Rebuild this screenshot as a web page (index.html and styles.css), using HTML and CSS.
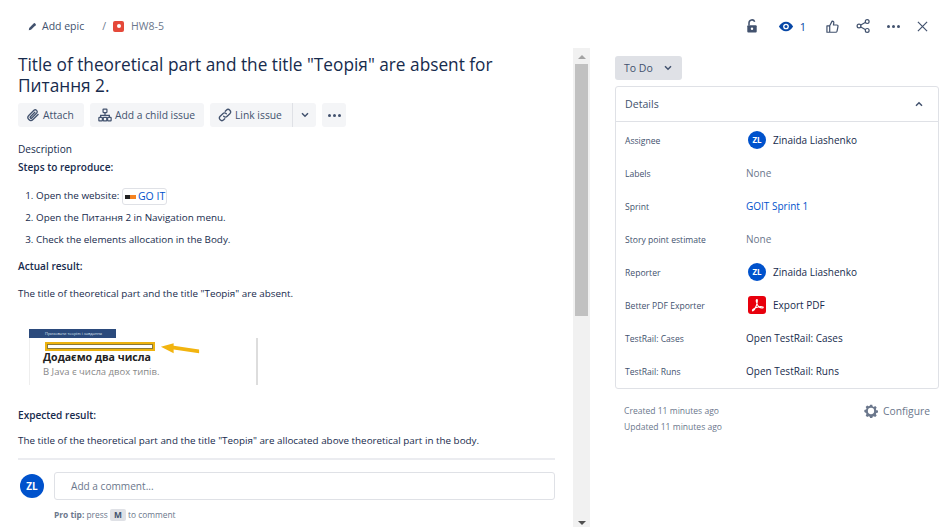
FILE: index.html
```html
<!DOCTYPE html>
<html lang="en">
<head>
  <meta charset="UTF-8">
  <title>HW8-5</title>
  <link rel="stylesheet" href="styles.css">
</head>
<body>
  <div class="page">
    <header class="topbar">
      <div class="crumbs">
        <a class="crumb crumb-epic">
          <svg class="ico-pen" viewBox="0 0 12 12"><path d="M1 11l.6-3L7.8 1.8a1 1 0 0 1 1.4 0l1 1a1 1 0 0 1 0 1.4L4 10.4z" fill="#42526e"/></svg>
          Add epic
        </a>
        <span class="slash">/</span>
        <span class="bug-ico"><i></i></span>
        <a class="crumb crumb-key">HW8-5</a>
      </div>
      <div class="top-actions">
        <svg class="ico-lock" viewBox="0 0 14 16"><path d="M3.5 7V4.2a3.4 3.4 0 0 1 6.6-1.1" fill="none" stroke="#42526e" stroke-width="1.8"/><rect x="1.5" y="7" width="11" height="8.5" rx="1.2" fill="#42526e"/><circle cx="7" cy="11.2" r="1.4" fill="#fff"/></svg>
        <span class="watch">
          <svg class="ico-eye" viewBox="0 0 18 12"><path d="M1 6c2-3.6 4.8-5.4 8-5.4s6 1.8 8 5.4c-2 3.6-4.8 5.4-8 5.4S3 9.6 1 6z" fill="#0747a6"/><circle cx="9" cy="6" r="3.2" fill="#fff"/><circle cx="9" cy="6" r="1.7" fill="#0747a6"/></svg>
          <span>1</span>
        </span>
        <svg class="ico-thumb" viewBox="0 0 14 14"><path d="M4 6.2 6.6 1.2c1.4-.2 2 .8 1.8 2L8 5.4h3.6c1 0 1.5.7 1.3 1.6l-1 5c-.2.7-.7 1.2-1.5 1.2H4zM1 6.4h3v6.8H1z" fill="none" stroke="#42526e" stroke-width="1.3" stroke-linejoin="round"/></svg>
        <svg class="ico-share" viewBox="0 0 14 14"><path d="M3 7l8-4.600M3 7l8 4.600" stroke="#42526e" stroke-width="1.2"/><circle cx="3" cy="7" r="1.9" fill="#fff" stroke="#42526e" stroke-width="1.2"/><circle cx="11.2" cy="2.6" r="1.9" fill="#fff" stroke="#42526e" stroke-width="1.2"/><circle cx="11.2" cy="11.4" r="1.9" fill="#fff" stroke="#42526e" stroke-width="1.2"/></svg>
        <span class="dots"><i></i><i></i><i></i></span>
        <svg class="ico-close" viewBox="0 0 12 12"><path d="M1 1l10 10M11 1 1 11" stroke="#42526e" stroke-width="1.3"/></svg>
      </div>
    </header>

    <div class="columns">
      <main class="issue">
        <div class="issue-body">
          <h1>Title of theoretical part and the title "Теорія" are absent for Питання 2.</h1>
          <div class="toolbar">
            <button class="btn btn-attach">
              <svg class="ico-btn" viewBox="0 0 16 16"><path d="M13.8 7.4 8 13.2a3.3 3.3 0 0 1-4.800-4.700l5.900-5.900a2.200 2.200 0 0 1 3.100 3.100l-5.600 5.700a1 1 0 0 1-1.500-1.500l5-5" fill="none" stroke="#42526e" stroke-width="1.5" stroke-linecap="round"/></svg>
              Attach
            </button>
            <button class="btn btn-child">
              <svg class="ico-btn" viewBox="0 0 16 16"><path d="M8 5v3.500M3 11V8.500h10V11" fill="none" stroke="#42526e" stroke-width="1.4"/><rect x="5.8" y="1.2" width="4.4" height="4" rx=".6" fill="none" stroke="#42526e" stroke-width="1.4"/><rect x="1" y="10.8" width="4" height="4" rx=".6" fill="none" stroke="#42526e" stroke-width="1.4"/><rect x="6" y="10.8" width="4" height="4" rx=".6" fill="none" stroke="#42526e" stroke-width="1.4"/><rect x="11" y="10.8" width="4" height="4" rx=".6" fill="none" stroke="#42526e" stroke-width="1.4"/></svg>
              Add a child issue
            </button>
            <div class="btn-group">
              <button class="btn btn-link">
                <svg class="ico-btn" viewBox="0 0 16 16"><path d="M6.5 9.5a2.800 2.800 0 0 0 4 0l3-3a2.800 2.800 0 0 0-4-4L8.300 3.700M9.500 6.500a2.800 2.800 0 0 0-4 0l-3 3a2.800 2.800 0 0 0 4 4l1.200-1.200" fill="none" stroke="#42526e" stroke-width="1.5" stroke-linecap="round"/></svg>
                Link issue
              </button>
              <button class="btn btn-caret"><svg class="ico-chev" viewBox="0 0 8 6"><path d="M1 1.3 4 4.300l3-3" fill="none" stroke="#42526e" stroke-width="1.5"/></svg></button>
            </div>
            <button class="btn btn-more"><span class="dots"><i></i><i></i><i></i></span></button>
          </div>

          <div class="desc-label">Description</div>
          <p class="strong first">Steps to reproduce:</p>
          <ol class="steps">
            <li>Open the website: <a class="smart-link"><span class="favicon"><i></i><b></b></span>GO IT</a></li>
            <li>Open the Питання 2 in Navigation menu.</li>
            <li>Check the elements allocation in the Body.</li>
          </ol>
          <p class="strong">Actual result:</p>
          <p class="para">The title of theoretical part and the title "Теорія" are absent.</p>

          <div class="shot">
            <div class="shot-bar">Приховати теорію і завдання</div>
            <div class="shot-page">
              <div class="shot-mark">
                <span class="shot-box"></span>
                <svg class="shot-arrow" viewBox="0 0 44 14"><path d="M43 11 15 7V11L1 4 15 0V3L43 7z" fill="#f2b40f"/></svg>
              </div>
              <div class="shot-title">Додаємо два числа</div>
              <div class="shot-text">В Java є числа двох типів.</div>
            </div>
          </div>

          <p class="strong">Expected result:</p>
          <p class="para para-last">The title of the theoretical part and the title "Теорія" are allocated above theoretical part in the body.</p>

          <div class="comment">
            <div class="avatar avatar-lg">ZL</div>
            <div class="comment-main">
              <div class="comment-input">Add a comment...</div>
              <div class="protip"><b>Pro tip:</b> press <kbd>M</kbd> to comment</div>
            </div>
          </div>
        </div>
        <div class="scrollbar">
          <span class="arrow-up"></span>
          <div class="track"><div class="thumb"></div></div>
          <span class="arrow-down"></span>
        </div>
      </main>

      <aside class="side">
        <button class="status">To Do <svg class="ico-chev" viewBox="0 0 8 6"><path d="M1 1.3 4 4.300l3-3" fill="none" stroke="#42526e" stroke-width="1.5"/></svg></button>
        <section class="panel">
          <div class="panel-head">
            <span>Details</span>
            <svg class="ico-chev" viewBox="0 0 8 6"><path d="M1 4.7 4 1.700l3 3" fill="none" stroke="#42526e" stroke-width="1.5"/></svg>
          </div>
          <div class="rows">
            <div class="row"><div class="key">Assignee</div><div class="val val-ico"><span class="avatar">ZL</span>Zinaida Liashenko</div></div>
            <div class="row"><div class="key">Labels</div><div class="val muted">None</div></div>
            <div class="row"><div class="key">Sprint</div><div class="val link">GOIT Sprint 1</div></div>
            <div class="row"><div class="key">Story point estimate</div><div class="val muted">None</div></div>
            <div class="row"><div class="key">Reporter</div><div class="val val-ico"><span class="avatar">ZL</span>Zinaida Liashenko</div></div>
            <div class="row"><div class="key">Better PDF Exporter</div><div class="val val-ico">
              <span class="pdf-ico"><svg viewBox="0 0 18 18"><path d="M9 3.5c-.8 0-.9 1-.6 2.500.4 2 1.500 4 3 5.300 1.200.8 3.500 1 3.800.2.200-.7-1.800-1.100-4-.8-2.300.3-4.900 1.300-6.200 2.700-.9 1-.6 1.600 0 1.400.9-.4 2.400-2.700 3.300-5 .7-1.900 1.500-6.300.7-6.300z" fill="none" stroke="#fff" stroke-width="1.1"/></svg></span>
              Export PDF</div></div>
            <div class="row"><div class="key">TestRail: Cases</div><div class="val">Open TestRail: Cases</div></div>
            <div class="row"><div class="key">TestRail: Runs</div><div class="val">Open TestRail: Runs</div></div>
          </div>
        </section>
        <div class="side-foot">
          <div class="dates">
            <div>Created 11 minutes ago</div>
            <div>Updated 11 minutes ago</div>
          </div>
          <a class="configure">
            <svg class="ico-gear" viewBox="0 0 16 16"><path d="M6.8 1h2.400l.4 1.900 1.300.6 1.700-1 1.700 1.700-1 1.700.6 1.300 1.900.4v2.400l-1.900.4-.6 1.300 1 1.700-1.700 1.700-1.700-1-1.300.6-.4 1.900H6.800l-.4-1.900-1.300-.6-1.700 1-1.700-1.700 1-1.700-.6-1.300L.2 9.400V7l1.900-.4.6-1.300-1-1.700 1.700-1.700 1.700 1 1.300-.6z" transform="translate(.2 -.2)" fill="#6b778c"/><circle cx="8" cy="8" r="3.6" fill="#fff"/></svg>
            Configure
          </a>
        </div>
      </aside>
    </div>
  </div>
</body>
</html>
```

FILE: styles.css
```css
* {
  margin: 0;
  padding: 0;
  box-sizing: border-box;
}
html, body {
  height: 527px;
  overflow: hidden;
}
body {
  font-family: "Open Sans", "Noto Sans", sans-serif;
  font-size: 10px;
  color: #172b4d;
  background-color: #fff;
}
button {
  font-family: inherit;
  border: 0;
  cursor: pointer;
}
svg {
  display: block;
  flex: none;
}
.page {
  display: flex;
  flex-direction: column;
  height: 527px;
}

/* top bar */
.topbar {
  display: flex;
  justify-content: space-between;
  align-items: center;
  height: 46px;
  padding: 6px 19px 0 28px;
  flex: none;
  font-size: 10.5px;
}
.crumbs {
  display: flex;
  align-items: center;
  color: #42526e;
}
.ico-pen {
  width: 9px;
  height: 9px;
}
.crumb-epic {
  display: flex;
  align-items: center;
  gap: 5px;
}
.crumb-key {
  color: #6b778c;
}
.slash {
  margin: 0 7px 0 18px;
  color: #6b778c;
}
.bug-ico {
  display: flex;
  align-items: center;
  justify-content: center;
  width: 11px;
  height: 11px;
  margin-right: 7px;
  background-color: #e5493a;
  border-radius: 2px;
}
.bug-ico i {
  width: 4px;
  height: 4px;
  background-color: #fff;
  border-radius: 50%;
}
.top-actions {
  display: flex;
  align-items: center;
}
.ico-lock {
  width: 12px;
  height: 14px;
  margin-right: 20px;
}
.watch {
  display: flex;
  align-items: center;
  gap: 6px;
  margin-right: 20px;
  color: #0747a6;
  font-size: 11px;
}
.ico-eye {
  width: 16px;
  height: 11px;
}
.ico-thumb {
  width: 13px;
  height: 13px;
  margin-right: 17px;
}
.ico-share {
  width: 14px;
  height: 14px;
  margin-right: 17px;
}
.dots {
  display: inline-flex;
  gap: 2px;
}
.dots i {
  width: 3px;
  height: 3px;
  background-color: #42526e;
  border-radius: 50%;
}
.top-actions .dots {
  margin-right: 17px;
}
.ico-close {
  width: 11px;
  height: 11px;
}

/* columns */
.columns {
  display: flex;
  flex: 1;
  min-height: 0;
}
.issue {
  display: flex;
  width: 590px;
  flex: none;
}
.issue-body {
  width: 573px;
  flex: none;
  padding: 8px 18px 0;
  overflow: hidden;
}
h1 {
  font-size: 17.25px;
  font-weight: 500;
  line-height: 21px;
  width: 500px;
  color: #172b4d;
}
.toolbar {
  display: flex;
  gap: 6px;
  margin-top: 7px;
}
.btn {
  display: flex;
  align-items: center;
  gap: 3px;
  height: 24px;
  padding: 0 8px;
  font-size: 10.3px;
  color: #42526e;
  background-color: #f4f5f7;
  border-radius: 3px;
}
.ico-btn {
  width: 14px;
  height: 14px;
}
.ico-chev {
  width: 8px;
  height: 6px;
}
.btn-attach {
  width: 66px;
}
.btn-child {
  width: 114px;
}
.btn-group {
  display: flex;
}
.btn-link {
  width: 82px;
  border-radius: 3px 0 0 3px;
}
.btn-caret {
  width: 24px;
  justify-content: center;
  padding: 0;
  border-left: 1px solid #dfe1e6;
  border-radius: 0 3px 3px 0;
}
.btn-more {
  width: 24px;
  justify-content: center;
  padding: 0;
}

/* description */
.desc-label {
  margin-top: 15px;
  font-size: 10.1px;
  line-height: 15px;
  color: #172b4d;
}
.strong {
  font-size: 10.1px;
  font-weight: 600;
  line-height: 15px;
  margin-top: 8px;
}
.strong.first {
  margin-top: 3px;
}
.para {
  font-size: 9.85px;
  line-height: 15px;
  margin-top: 12px;
  color: #172b4d;
}
.para-last {
  margin-top: 10px;
}
.steps {
  margin-top: 10px;
  padding-left: 18px;
  font-size: 9.85px;
  line-height: 15px;
}
.steps li {
  height: 22px;
  padding-top: 3px;
}
.smart-link {
  display: inline-flex;
  align-items: center;
  gap: 2px;
  height: 17px;
  padding: 0 1px 0 2px;
  color: #0052cc;
  font-size: 10.5px;
  border: 1px solid #dfe1e6;
  border-radius: 3px;
  vertical-align: middle;
}
.favicon {
  display: flex;
}
.favicon i {
  width: 5px;
  height: 4px;
  background-color: #222;
}
.favicon b {
  width: 6px;
  height: 4px;
  background-color: #f58220;
}

/* pasted picture */
.shot {
  width: 229px;
  height: 56px;
  margin: 28px 0 23px 11px;
  display: flex;
  flex-direction: column;
}
.shot + .strong {
  margin-top: 0;
}
.shot-bar {
  width: 87px;
  height: 9px;
  background-color: #2b4a7c;
  color: #dfe6f2;
  font-size: 4px;
  line-height: 9px;
  padding-left: 16px;
  white-space: nowrap;
  overflow: hidden;
}
.shot-page {
  flex: 1;
  padding: 4px 0 0 15px;
  border-left: 1px solid #eee;
  border-right: 2px solid #ddd;
}
.shot-mark {
  display: flex;
  align-items: flex-start;
  gap: 5px;
  height: 9px;
}
.shot-box {
  width: 110px;
  height: 9px;
  border: 2px solid #edb20f;
  outline: 1px solid #8a7a3a;
  outline-offset: -3px;
}
.shot-arrow {
  width: 40px;
  height: 13px;
  margin-top: 1px;
}
.shot-title {
  font-size: 10.6px;
  font-weight: 700;
  line-height: 13px;
  margin: 0 0 0 -2px;
  color: #222;
}
.shot-text {
  font-size: 9.5px;
  line-height: 12px;
  margin: 2px 0 0 -2px;
  color: #888;
}

/* comment */
.comment {
  display: flex;
  gap: 10px;
  margin-top: 10px;
  padding-top: 12px;
  border-top: 2px solid #ebecf0;
}
.avatar {
  display: inline-flex;
  align-items: center;
  justify-content: center;
  width: 18px;
  height: 18px;
  flex: none;
  background-color: #0052cc;
  color: #fff;
  font-size: 8px;
  font-weight: 700;
  border-radius: 50%;
}
.avatar-lg {
  width: 24px;
  height: 24px;
  margin: 2px 0 0 2px;
  font-size: 10px;
}
.comment-main {
  flex: 1;
}
.comment-input {
  height: 28px;
  padding: 0 16px;
  line-height: 26px;
  font-size: 10.1px;
  color: #6b778c;
  border: 1px solid #dfe1e6;
  border-radius: 3px;
}
.protip {
  margin-top: 9px;
  font-size: 8.4px;
  color: #6b778c;
}
.protip b {
  font-weight: 700;
}
.protip kbd {
  display: inline-block;
  padding: 0 4px;
  font-family: inherit;
  font-weight: 700;
  line-height: 12px;
  color: #42526e;
  background-color: #dfe1e6;
  border-radius: 2px;
}

/* fake browser scrollbar */
.scrollbar {
  display: flex;
  flex-direction: column;
  align-items: center;
  width: 17px;
  flex: none;
  margin-top: 2px;
  background-color: #f1f1f1;
}
.arrow-up,
.arrow-down {
  width: 0;
  height: 0;
  flex: none;
  border-left: 4px solid transparent;
  border-right: 4px solid transparent;
}
.arrow-up {
  margin-top: 7px;
  border-bottom: 4px solid #a3a3a3;
}
.arrow-down {
  margin-bottom: 2px;
  border-top: 4px solid #505050;
}
.track {
  flex: 1;
  width: 100%;
  padding: 5px 2px 0;
}
.thumb {
  height: 252px;
  background-color: #c1c1c1;
}

/* right side */
.side {
  width: 324px;
  margin-left: 25px;
  padding-top: 10px;
}
.status {
  display: flex;
  align-items: center;
  gap: 11px;
  height: 24px;
  padding: 0 9px;
  width: 67px;
  font-size: 10.5px;
  color: #42526e;
  background-color: #dfe1e6;
  border-radius: 3px;
}
.panel {
  margin-top: 6px;
  border: 1px solid #dfe1e6;
  border-radius: 3px;
}
.panel-head {
  display: flex;
  justify-content: space-between;
  align-items: center;
  height: 35px;
  padding: 0 15px 0 9px;
  font-size: 10.6px;
  color: #42526e;
  border-bottom: 1px solid #dfe1e6;
}
.rows {
  padding: 2px 0 0;
  height: 266px;
}
.row {
  display: flex;
  align-items: center;
  height: 33px;
  padding-left: 9px;
}
.key {
  width: 121px;
  flex: none;
  font-size: 8.6px;
  color: #42526e;
}
.val {
  margin-bottom: 2px;
  font-size: 10px;
  color: #172b4d;
}
.val-ico {
  display: flex;
  align-items: center;
  gap: 7px;
  padding-left: 2px;
}
.muted {
  color: #6b778c;
}
.link {
  color: #0052cc;
}
.pdf-ico {
  display: block;
  width: 18px;
  height: 18px;
  background-color: #e8000d;
  border-radius: 3px;
}
.side-foot {
  display: flex;
  justify-content: space-between;
  align-items: flex-start;
  margin-top: 14px;
  padding: 0 9px;
}
.dates {
  font-size: 8.55px;
  line-height: 16px;
  color: #6b778c;
}
.configure {
  display: flex;
  align-items: center;
  gap: 5px;
  padding-top: 1px;
  font-size: 10.3px;
  color: #6b778c;
}
.ico-gear {
  width: 14px;
  height: 14px;
}
```
